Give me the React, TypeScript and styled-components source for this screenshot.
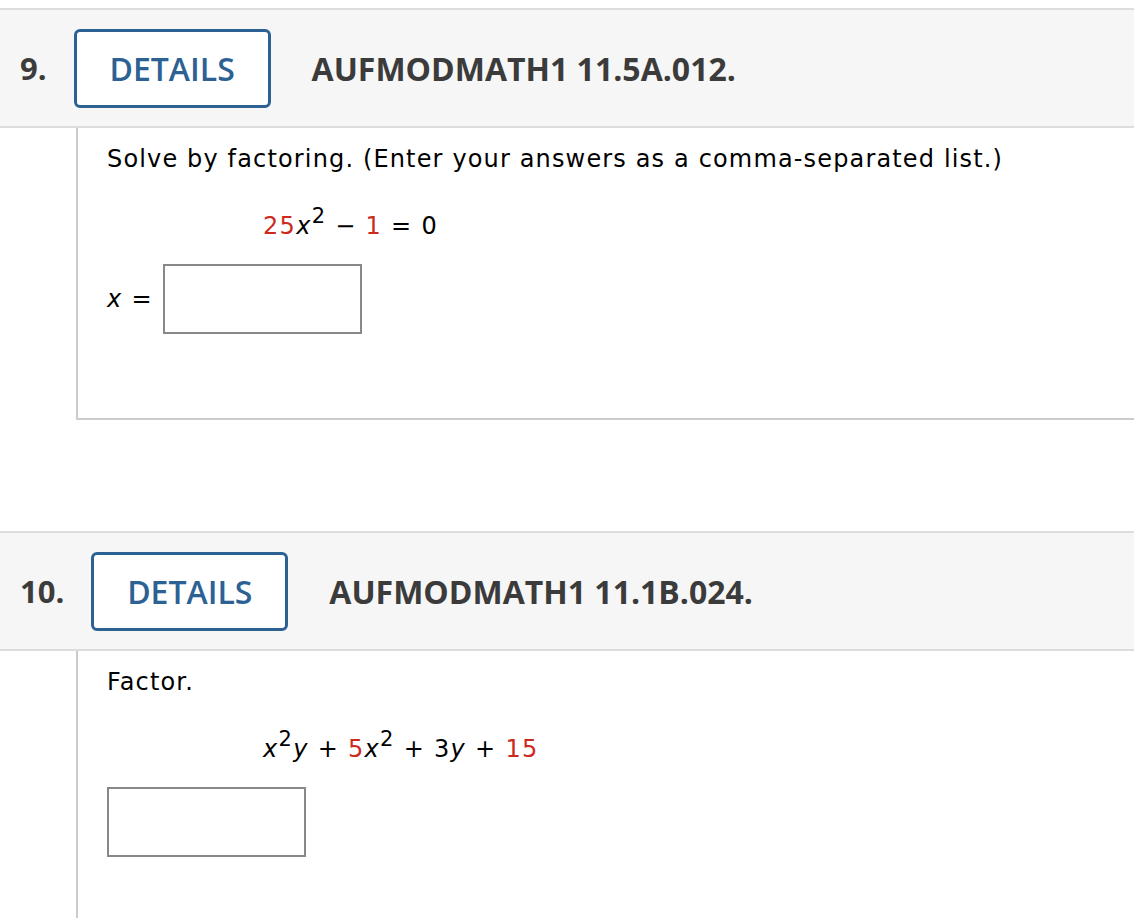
import { FC, ReactNode } from 'react'
import styled, { createGlobalStyle } from 'styled-components'

const GlobalStyle = createGlobalStyle`
  html, body {
    margin: 0;
    padding: 0;
    background: #fff;
  }
  body {
    font-family: 'DejaVu Sans', Verdana, sans-serif;
    color: #000;
  }
`

type Question = {
  number: string
  code: string
  body: ReactNode
}

const App: FC = () => {
  const questions: Question[] = [
    {
      number: '9.',
      code: 'AUFMODMATH1 11.5A.012.',
      body: (
        <>
          <Prompt>Solve by factoring. (Enter your answers as a comma-separated list.)</Prompt>
          <Equation>
            <RedText>25</RedText>
            <Var>x</Var>
            <Sup>2</Sup> − <RedText>1</RedText> = 0
          </Equation>
          <AnswerRow>
            <Label>
              <Var>x</Var> =
            </Label>
            <AnswerBox />
          </AnswerRow>
        </>
      )
    },
    {
      number: '10.',
      code: 'AUFMODMATH1 11.1B.024.',
      body: (
        <>
          <Prompt>Factor.</Prompt>
          <Equation>
            <Var>x</Var>
            <Sup>2</Sup>
            <Var>y</Var> + <RedText>5</RedText>
            <Var>x</Var>
            <Sup>2</Sup> + 3<Var>y</Var> + <RedText>15</RedText>
          </Equation>
          <AnswerRow>
            <AnswerBox />
          </AnswerRow>
        </>
      )
    }
  ]

  return (
    <Page>
      <GlobalStyle />
      {questions.map((q) => (
        <Section key={q.number}>
          <Header>
            <Number>{q.number}</Number>
            <DetailsButton>DETAILS</DetailsButton>
            <Code>{q.code}</Code>
          </Header>
          <Content>{q.body}</Content>
        </Section>
      ))}
    </Page>
  )
}

const Page = styled.div`
  padding-top: 8px;
  display: flex;
  flex-direction: column;
  gap: 111px;
  height: 918px;
  box-sizing: border-box;
  overflow: hidden;
`

const Section = styled.div`
  display: flex;
  flex-direction: column;
  flex-shrink: 0;
`

const Header = styled.div`
  display: flex;
  align-items: center;
  height: 116px;
  padding-left: 20px;
  background: #f6f6f6;
  border-top: 2px solid #dddddd;
  border-bottom: 2px solid #dddddd;
  font-family: 'Open Sans', 'Liberation Sans', sans-serif;
`

const Number = styled.span`
  font-size: 31px;
  font-weight: 700;
  color: #3c3c3c;
  margin-right: 27px;
`

const DetailsButton = styled.button`
  box-sizing: border-box;
  width: 197px;
  height: 79px;
  border: 3px solid #2c6193;
  border-radius: 6px;
  background: #fff;
  color: #2c6193;
  font-family: 'Open Sans', 'Liberation Sans', sans-serif;
  font-size: 32px;
  font-weight: 600;
  padding: 0;
  cursor: pointer;
`

const Code = styled.span`
  margin-left: 41px;
  font-size: 32px;
  font-weight: 700;
  color: #3b3b3b;
`

const Content = styled.div`
  margin-left: 76px;
  border-left: 2px solid #cccccc;
  border-bottom: 2px solid #cccccc;
  padding: 14px 0 0 29px;
  min-height: 276px;
`

const Prompt = styled.p`
  margin: 0;
  font-size: 24px;
  line-height: 34px;
  letter-spacing: 1.15px;
`

const Equation = styled.div`
  margin: 33px 0 0 156px;
  font-size: 24px;
  line-height: 34px;
  letter-spacing: 1.3px;
  white-space: pre;
`

const Var = styled.i`
  font-style: italic;
`

const Sup = styled.sup`
  font-size: 21px;
  line-height: 0;
  vertical-align: 11px;
`

const RedText = styled.span`
  color: #cc2a1f;
`

const AnswerRow = styled.div`
  display: flex;
  align-items: center;
  gap: 10px;
  margin-top: 21px;
`

const Label = styled.span`
  font-size: 24px;
  letter-spacing: 1.3px;
`

const AnswerBox = styled.div`
  box-sizing: border-box;
  width: 199px;
  height: 70px;
  border: 2px solid #888888;
  background: #fff;
`

export default App
